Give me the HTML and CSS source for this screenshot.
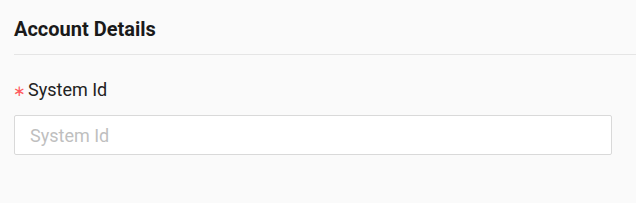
FILE: index.html
```html
<!DOCTYPE html>
<html lang="en">
<head>
  <meta charset="UTF-8">
  <title>Account Details</title>
  <link rel="stylesheet" href="styles.css">
</head>
<body>
  <section class="panel">
    <h2 class="panel-title">Account Details</h2>
    <form class="form">
      <label class="field-label" for="systemId"><span class="req">∗</span>System Id</label>
      <input class="field-input" id="systemId" type="text" placeholder="System Id">
    </form>
  </section>
</body>
</html>
```

FILE: styles.css
```css
* {
  box-sizing: border-box;
}

body {
  margin: 0;
  background: #fafafa;
  font-family: Roboto, "Liberation Sans", sans-serif;
  color: #1f1f1f;
}

.panel {
  padding-left: 14px;
}

.panel-title {
  margin: 0;
  padding: 17px 0 13px;
  font-size: 20px;
  font-weight: 700;
  line-height: 24px;
  color: #1a1a1a;
  border-bottom: 1px solid #e5e5e5;
}

.form {
  display: flex;
  flex-direction: column;
  padding: 23px 24px 0 0;
}

.field-label {
  display: flex;
  align-items: baseline;
  height: 24px;
  font-size: 18px;
  line-height: 24px;
  color: #222;
  margin-bottom: 13px;
}

.req {
  flex: none;
  width: 14px;
  margin-left: -1px;
  margin-right: 1px;
  color: #ff5a60;
  font-family: "DejaVu Sans", sans-serif;
  font-size: 15px;
  line-height: 1;
}

.field-input {
  height: 40px;
  width: 598px;
  padding: 0 15px;
  border: 1px solid #d9d9d9;
  border-radius: 2px;
  background: #fff;
  font: 18px Roboto, "Liberation Sans", sans-serif;
  color: #222;
}

.field-input::placeholder {
  color: #bfbfbf;
}
```
